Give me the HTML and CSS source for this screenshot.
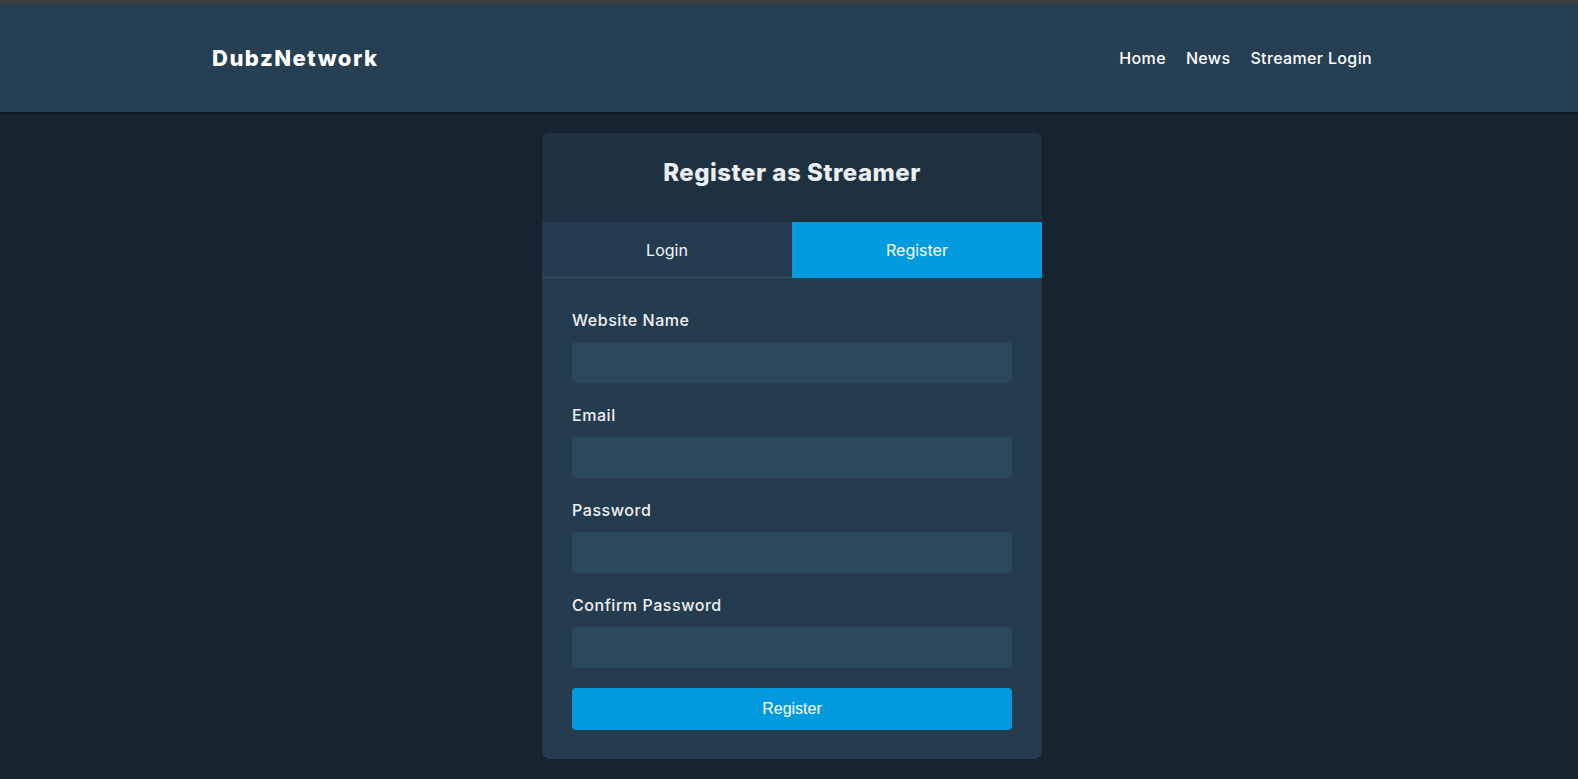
FILE: index.html
```html
<!DOCTYPE html>
<html lang="en">
<head>
<meta charset="utf-8">
<title>DubzNetwork - Register</title>
<link rel="stylesheet" href="styles.css">
</head>
<body>
<div class="topstrip"></div>
<header class="header">
  <div class="container header-inner">
    <a class="logo" href="#">DubzNetwork</a>
    <nav class="nav">
      <a href="#">Home</a>
      <a href="#">News</a>
      <a href="#">Streamer Login</a>
    </nav>
  </div>
</header>
<main class="main">
  <section class="card">
    <h1 class="card-title">Register as Streamer</h1>
    <div class="tabs">
      <button class="tab">Login</button>
      <button class="tab active">Register</button>
    </div>
    <form class="form">
      <div class="field">
        <label>Website Name</label>
        <input type="text">
      </div>
      <div class="field">
        <label>Email</label>
        <input type="email">
      </div>
      <div class="field">
        <label>Password</label>
        <input type="password">
      </div>
      <div class="field">
        <label>Confirm Password</label>
        <input type="password">
      </div>
      <button type="button" class="submit">Register</button>
    </form>
  </section>
</main>
</body>
</html>
```
FILE: styles.css
```css
* { box-sizing: border-box; }
html, body { margin: 0; padding: 0; }
body {
  background: #17242f;
  font-family: "Inter", "Open Sans", sans-serif;
  color: #f2f5f8;
  min-height: 779px;
  padding-left: 6px;
}
.topstrip {
  height: 4px;
  background: #3b3c3d;
  margin-left: -6px;
}
.header {
  height: 108px;
  background: #263f52;
  box-shadow: 0 2px 2px rgba(0,0,0,0.35);
  margin-left: -6px;
  padding-left: 6px;
}
.container {
  width: 1160px;
  margin: 0 auto;
}
.header-inner {
  height: 100%;
  display: flex;
  align-items: center;
  justify-content: space-between;
}
.logo {
  color: #ffffff;
  text-decoration: none;
  font-weight: 800;
  font-size: 22px;
  letter-spacing: 1.5px;
}
.nav {
  display: flex;
  gap: 20px;
}
.nav a {
  color: #ffffff;
  text-decoration: none;
  font-weight: 500;
  font-size: 16px;
  letter-spacing: 0.35px;
}
.main {
  display: flex;
  justify-content: center;
  padding-top: 21px;
}
.card {
  width: 500px;
  border-radius: 8px;
  overflow: hidden;
  background: #253c4f;
}
.card-title {
  margin: 0;
  height: 89px;
  display: flex;
  align-items: center;
  justify-content: center;
  background: #1f3140;
  font-size: 24px;
  font-weight: 800;
  letter-spacing: 0.5px;
  color: #e9eff4;
  padding-bottom: 10px;
}
.tabs {
  display: grid;
  grid-template-columns: 1fr 1fr;
  height: 56px;
  border-bottom: 1px solid #3a5164;
}
.tab {
  border: none;
  background: #253c50;
  color: #f2f5f8;
  font-family: inherit;
  font-size: 16px;
  font-weight: 400;
  cursor: pointer;
}
.tab.active {
  background: #019ade;
  color: #ffffff;
  margin-bottom: -1px;
}
.form {
  padding: 30px 30px 29px;
  display: flex;
  flex-direction: column;
  gap: 20px;
}
.field {
  display: flex;
  flex-direction: column;
  gap: 10px;
}
.field label {
  font-size: 16px;
  font-weight: 500;
  letter-spacing: 0.55px;
  line-height: 24px;
  color: #eef2f6;
}
.field input {
  height: 41px;
  border: 1px solid #2d4658;
  border-radius: 4px;
  background: #2b495c;
  color: #fff;
  padding: 0 12px;
  outline: none;
}
.submit {
  height: 42px;
  border: none;
  border-radius: 4px;
  background: #019ade;
  color: #ffffff;
  font-family: "Liberation Sans", Arial, sans-serif;
  font-size: 16px;
  cursor: pointer;
}
```
